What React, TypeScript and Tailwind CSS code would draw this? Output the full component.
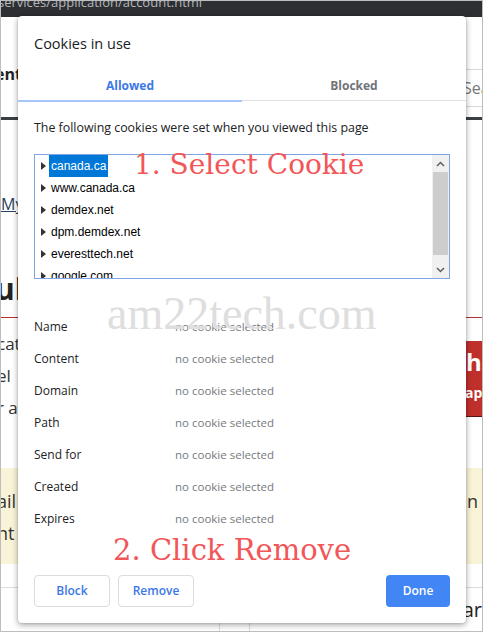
import React from 'react';

const cookies = ['canada.ca', 'www.canada.ca', 'demdex.net', 'dpm.demdex.net', 'everesttech.net', 'google.com'];
const fields = ['Name', 'Content', 'Domain', 'Path', 'Send for', 'Created', 'Expires'];

const Caret = () => (
    <svg width="5" height="8" viewBox="0 0 5 8" className="shrink-0">
        <path d="M0 0 L5 4 L0 8 Z" fill="#333" />
    </svg>
);

const BackgroundPage = () => (
    <div className="flex flex-col w-full h-full font-['Open_Sans',sans-serif]">
        <div className="h-[16px] bg-[#2d2f33] overflow-hidden shrink-0">
            <div className="-mt-[7px] -ml-[3px] text-[13px] leading-[16px] text-[#b4b6ba] whitespace-nowrap">services/application/account.html</div>
        </div>
        <div className="h-[100px] flex justify-between shrink-0">
            <div className="pt-[45px] -ml-[6px] text-[16px] font-bold text-[#222] leading-[24px]">ent</div>
            <div className="mt-[52px] h-[38px] w-[19px] border-y border-[#d8d8d8] flex items-center text-[16px] text-[#777] overflow-hidden whitespace-nowrap">Search</div>
        </div>
        <div className="h-[3px] bg-[#3a3f45] shrink-0" />
        <div className="h-[197px] flex flex-col shrink-0">
            <div className="mt-[73px] text-[16px] leading-[22px] text-[#284162] underline whitespace-nowrap">My account</div>
            <div className="mt-[56px] -ml-[6px] text-[30px] font-bold leading-[36px] text-[#222]">ul</div>
        </div>
        <div className="h-[1px] bg-[#b6322e] shrink-0" />
        <div className="h-[150px] flex justify-between shrink-0">
            <div className="pt-[10px] -ml-[4px] text-[17px] leading-[32px] text-[#333]">
                <div>cat</div>
                <div>el</div>
                <div>r a</div>
            </div>
            <div className="mt-[23px] h-[76px] w-[17px] bg-[#bf302c] border-b border-[#5a1513] text-white font-bold overflow-hidden">
                <div className="pt-[4px] text-[24px] leading-[34px] pl-[1px]">h</div>
                <div className="mt-[6px] text-[14px] leading-[16px]">ap</div>
            </div>
        </div>
        <div className="h-[96px] bg-[#f9f4d8] flex justify-between text-[18px] leading-[32px] text-[#333] shrink-0">
            <div className="pt-[17px] -ml-[4px]">
                <div>ail</div>
                <div>nt</div>
            </div>
            <div className="pt-[17px] pr-[4px]">n</div>
        </div>
        <div className="h-[24px] border-b border-[#dcdcdc] shrink-0" />
        <div className="flex-1 grid grid-cols-[219px_30px_1fr]">
            <div className="border-r border-[#dcdcdc]" />
            <div className="border-r border-[#dcdcdc]" />
            <div className="flex justify-end items-start pt-[10px] text-[20px] leading-[24px] text-[#222]">ar</div>
        </div>
    </div>
);

const CookieDialog = () => (
    <div className="absolute left-[17px] top-[15px] w-[448px] h-[607px] bg-white rounded-[4px] shadow-[0_2px_6px_rgba(0,0,0,0.35),0_0_2px_rgba(0,0,0,0.2)] flex flex-col font-['Open_Sans',sans-serif] text-[#202124]">
        <div className="pl-[16px] pt-[18px] h-[56px] text-[14.5px] leading-[20px]">Cookies in use</div>
        <div className="flex h-[30px]">
            <div className="flex-1 flex items-center justify-center border-b-2 border-[#a8c5f7] text-[12px] font-bold text-[#3b78e7]">Allowed</div>
            <div className="flex-1 flex items-center justify-center border-b border-[#e0e0e0] mb-[1px] text-[12px] font-bold text-[#6f7377]">Blocked</div>
        </div>
        <div className="mt-[18px] px-[16px] text-[12.4px] leading-[16px]">The following cookies were set when you viewed this page</div>
        <div className="mt-[18px] mx-[16px] h-[125px] border border-[#7fa6e2] flex overflow-hidden">
            <div className="flex-1 flex flex-col">
                {cookies.map((c, i) => (
                    <div key={c} className="h-[22px] shrink-0 flex items-center pl-[6px] gap-[3px] text-[12px] text-black font-['Liberation_Sans',sans-serif]">
                        <Caret />
                        <span className={i === 0 ? 'bg-[#0078d7] text-white px-[2px] leading-[22px]' : 'px-[2px]'}>{c}</span>
                    </div>
                ))}
            </div>
            <div className="w-[17px] bg-[#f0f0f0] flex flex-col">
                <div className="h-[17px] flex items-center justify-center">
                    <svg width="9" height="6" viewBox="0 0 9 6"><path d="M1 5 L4.5 1.5 L8 5" stroke="#606060" strokeWidth="1.5" fill="none" /></svg>
                </div>
                <div className="flex-1 flex flex-col px-[1px]">
                    <div className="h-[83px] bg-[#cdcdcd]" />
                </div>
                <div className="h-[17px] flex items-center justify-center">
                    <svg width="9" height="6" viewBox="0 0 9 6"><path d="M1 1 L4.5 4.5 L8 1" stroke="#606060" strokeWidth="1.5" fill="none" /></svg>
                </div>
            </div>
        </div>
        <div className="mt-[32px] px-[16px] flex flex-col text-[12px]">
            {fields.map(f => (
                <div key={f} className="h-[32px] flex items-center">
                    <span className="w-[141px] text-[#202124]">{f}</span>
                    <span className="text-[11.5px] text-[#757a80]">no cookie selected</span>
                </div>
            ))}
        </div>
        <div className="mt-[40px] px-[16px] flex items-center gap-[8px] text-[12px] font-semibold">
            <button className="w-[76px] h-[32px] rounded-[4px] border border-[#dadce0] text-[#3b78e7]">Block</button>
            <button className="w-[76px] h-[32px] rounded-[4px] border border-[#dadce0] text-[#3b78e7]">Remove</button>
            <button className="ml-auto w-[64px] h-[32px] rounded-[4px] bg-[#4285f4] text-white">Done</button>
        </div>
        <div className="absolute left-[116px] top-[129px] text-[28px] leading-[40px] text-[#f25658] font-['DejaVu_Serif',serif] whitespace-nowrap">1. Select Cookie</div>
        <div className="absolute left-[89px] top-[271px] text-[46px] leading-[54px] text-[#dedede] font-['Liberation_Serif',serif] whitespace-nowrap">am22tech.com</div>
        <div className="absolute left-[95px] top-[514px] text-[29px] leading-[40px] text-[#f25658] font-['DejaVu_Serif',serif] whitespace-nowrap">2. Click Remove</div>
    </div>
);

export default function App() {
    return (
        <div className="relative w-[483px] h-[632px] overflow-hidden bg-white border border-[#bdbdbd]">
            <BackgroundPage />
            <CookieDialog />
        </div>
    );
}
